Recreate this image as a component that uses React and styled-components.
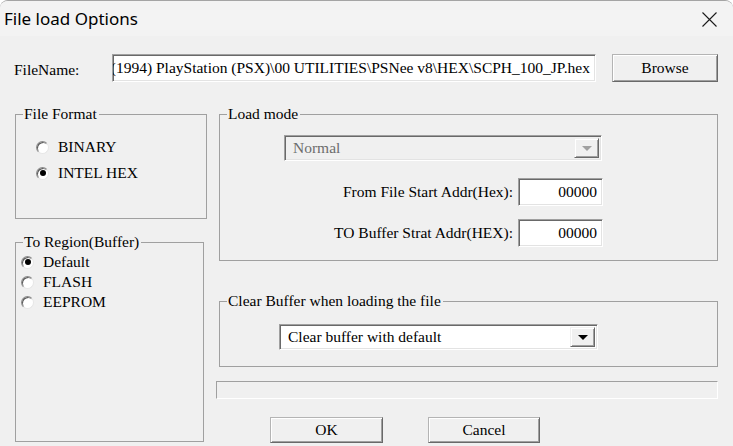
import styled, { createGlobalStyle } from "styled-components";

const serif = `"Liberation Serif", "Times New Roman", Tinos, "DejaVu Serif", serif`;

const GlobalStyle = createGlobalStyle`
  html, body {
    margin: 0;
    padding: 0;
    background: #ffffff;
    overflow: hidden;
  }
  body {
    font-family: ${serif};
    font-size: 15.5px;
    color: #000;
  }
`;

const Window = styled.div`
  width: 733px;
  height: 446px;
  box-sizing: border-box;
  display: flex;
  flex-direction: column;
  background: #f0f0f0;
  border-top: 1px solid #a4a4a4;
  border-radius: 8px 8px 0 0;
  overflow: hidden;
  font-family: ${serif};
`;

const TitleBar = styled.div`
  height: 35px;
  flex: none;
  display: flex;
  align-items: center;
  justify-content: space-between;
  padding-left: 4px;
  background: #f3f3f3;
  font-family: "Noto Sans", "Open Sans", sans-serif;
  font-size: 17px;
  color: #000;
`;

const CloseBox = styled.div`
  width: 15px;
  height: 15px;
  margin-right: 16px;
  margin-top: 1px;
  display: flex;
`;

const Body = styled.div`
  flex: 1;
  display: flex;
  flex-direction: column;
  padding: 18px 0 0 14px;
`;

const FileRow = styled.div`
  display: flex;
  align-items: center;
  height: 28px;
`;

const FieldLabel = styled.span`
  width: 98px;
  flex: none;
  padding-top: 4px;
`;

const Sunken = styled.div`
  box-sizing: border-box;
  border: 1px solid;
  border-color: #a0a0a0 #ffffff #ffffff #a0a0a0;
  box-shadow: inset 1px 1px 0 #696969, inset -1px -1px 0 #e3e3e3;
  background: ${(p) => (p.$disabled ? "#f0f0f0" : "#ffffff")};
`;

const TextBox = styled(Sunken)`
  width: ${(p) => p.$w}px;
  height: ${(p) => p.$h}px;
  flex: none;
  display: flex;
  align-items: center;
  justify-content: flex-end;
  overflow: hidden;
  white-space: nowrap;
  padding-right: ${(p) => p.$pr || 4}px;
`;

const Button = styled.button`
  box-sizing: border-box;
  width: ${(p) => p.$w}px;
  height: ${(p) => p.$h || 26}px;
  margin-left: ${(p) => p.$ml || 0}px;
  padding: 0;
  flex: none;
  font-family: ${serif};
  font-size: 15.5px;
  color: #000;
  background: #f0f0f0;
  border: 1px solid;
  border-color: #b4b4b4 #696969 #696969 #b4b4b4;
  box-shadow: inset 1px 1px 0 #ffffff, inset -1px -1px 0 #a0a0a0;
`;

const Main = styled.div`
  display: flex;
  margin-top: 23px;
`;

const LeftCol = styled.div`
  width: 192px;
  margin-left: 1px;
  display: flex;
  flex-direction: column;
`;

const RightCol = styled.div`
  width: 502px;
  margin-left: 9px;
  display: flex;
  flex-direction: column;
`;

const GroupBox = styled.fieldset`
  box-sizing: border-box;
  margin: ${(p) => p.$mt || 0}px 0 0 ${(p) => p.$ml || 0}px;
  padding: 0;
  min-width: 0;
  width: ${(p) => p.$w}px;
  height: ${(p) => (p.$h ? `${p.$h}px` : "auto")};
  border: 1px solid #a0a0a0;
`;

const Legend = styled.legend`
  margin-left: 7px;
  padding: 0 2px 0 1px;
  line-height: 18px;
  font-size: 15.5px;
`;

const RadioList = styled.div`
  display: flex;
  flex-direction: column;
  gap: ${(p) => p.$gap}px;
  padding: ${(p) => p.$pt}px 0 0 ${(p) => p.$pl}px;
`;

const RadioRow = styled.label`
  display: flex;
  align-items: center;
  gap: 9px;
  height: 20px;
  line-height: 20px;
`;

const RadioDot = styled.span`
  box-sizing: border-box;
  width: 13px;
  height: 13px;
  flex: none;
  border-radius: 50%;
  background: #fff;
  border: 1px solid;
  border-color: #8a8a8a #e6e6e6 #e6e6e6 #8a8a8a;
  box-shadow: inset 1px 1px 0 #5a5a5a;
  display: flex;
  align-items: center;
  justify-content: center;

  &::after {
    content: "";
    width: 6px;
    height: 6px;
    border-radius: 50%;
    background: #000;
    display: ${(p) => (p.$on ? "block" : "none")};
  }
`;

const LoadContent = styled.div`
  display: flex;
  flex-direction: column;
  align-items: flex-end;
  padding: 12px 114px 0 0;
`;

const Combo = styled(Sunken)`
  width: ${(p) => p.$w}px;
  height: 26px;
  display: flex;
  align-items: stretch;
  padding: 2px;
  margin-right: ${(p) => p.$mr || 0}px;
`;

const ComboText = styled.span`
  flex: 1;
  display: flex;
  align-items: center;
  padding-left: 6px;
  color: ${(p) => (p.$disabled ? "#6d6d6d" : "#000")};
`;

const DropButton = styled.span`
  box-sizing: border-box;
  width: 25px;
  display: flex;
  align-items: center;
  justify-content: center;
  background: #f0f0f0;
  border: 1px solid;
  border-color: #f0f0f0 #696969 #696969 #f0f0f0;
  box-shadow: inset 1px 1px 0 #ffffff, inset -1px -1px 0 #a0a0a0;

  &::after {
    content: "";
    width: 0;
    height: 0;
    border-left: 5px solid transparent;
    border-right: 5px solid transparent;
    border-top: 5px solid ${(p) => (p.$disabled ? "#a0a0a0" : "#000")};
    margin-top: 1px;
  }
`;

const AddrRow = styled.div`
  display: flex;
  align-items: center;
  gap: 5px;
  margin-top: ${(p) => p.$mt}px;
`;

const ClearContent = styled.div`
  padding: 14px 0 16px 59px;
`;

const Progress = styled.div`
  box-sizing: border-box;
  width: 502px;
  height: 18px;
  margin-top: 14px;
  border: 1px solid;
  border-color: #a0a0a0 #ffffff #ffffff #a0a0a0;
  background: #f0f0f0;
`;

const ButtonRow = styled.div`
  display: flex;
  margin-top: 18px;
  padding-left: 54px;
`;

const CloseIcon = () => (
  <svg width="15" height="15" viewBox="0 0 15 15">
    <path d="M0.5 0.5 L14.5 14.5 M14.5 0.5 L0.5 14.5" stroke="#1b1b1b" strokeWidth="1.1" fill="none" />
  </svg>
);

const Radio = ({ on, children }) => (
  <RadioRow>
    <RadioDot $on={on} />
    <span>{children}</span>
  </RadioRow>
);

const App = () => {
  const fileName = "(1994) PlayStation (PSX)\\00 UTILITIES\\PSNee v8\\HEX\\SCPH_100_JP.hex";

  return (
    <>
      <GlobalStyle />
      <Window>
        <TitleBar>
          <span>File load Options</span>
          <CloseBox>
            <CloseIcon />
          </CloseBox>
        </TitleBar>

        <Body>
          <FileRow>
            <FieldLabel>FileName:</FieldLabel>
            <TextBox $w={484} $h={28} $pr={5}>{fileName}</TextBox>
            <Button $w={106} $h={28} $ml={16}>Browse</Button>
          </FileRow>

          <Main>
            <LeftCol>
              <GroupBox $w={192} $h={114}>
                <Legend>File Format</Legend>
                <RadioList $gap={6} $pt={14} $pl={20}>
                  <Radio>BINARY</Radio>
                  <Radio on>INTEL HEX</Radio>
                </RadioList>
              </GroupBox>

              <GroupBox $w={189} $h={209} $mt={14}>
                <Legend>To Region(Buffer)</Legend>
                <RadioList $gap={0} $pt={1} $pl={5}>
                  <Radio on>Default</Radio>
                  <Radio>FLASH</Radio>
                  <Radio>EEPROM</Radio>
                </RadioList>
              </GroupBox>
            </LeftCol>

            <RightCol>
              <GroupBox $w={499} $h={156} $ml={3}>
                <Legend>Load mode</Legend>
                <LoadContent>
                  <Combo $w={318} $mr={1} $disabled>
                    <ComboText $disabled>Normal</ComboText>
                    <DropButton $disabled />
                  </Combo>
                  <AddrRow $mt={17}>
                    <span>From File Start Addr(Hex):</span>
                    <TextBox $w={85} $h={28} $pr={5}>00000</TextBox>
                  </AddrRow>
                  <AddrRow $mt={13}>
                    <span>TO Buffer Strat Addr(HEX):</span>
                    <TextBox $w={85} $h={28} $pr={5}>00000</TextBox>
                  </AddrRow>
                </LoadContent>
              </GroupBox>

              <GroupBox $w={499} $ml={3} $mt={31}>
                <Legend>Clear Buffer when loading the file</Legend>
                <ClearContent>
                  <Combo $w={319}>
                    <ComboText>Clear buffer with default</ComboText>
                    <DropButton />
                  </Combo>
                </ClearContent>
              </GroupBox>

              <Progress />

              <ButtonRow>
                <Button $w={113}>OK</Button>
                <Button $w={112} $ml={45}>Cancel</Button>
              </ButtonRow>
            </RightCol>
          </Main>
        </Body>
      </Window>
    </>
  );
};

export default App;
